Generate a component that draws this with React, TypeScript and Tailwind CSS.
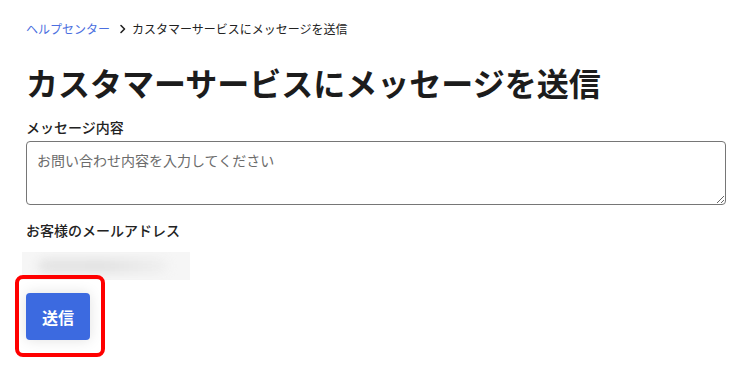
import React from 'react';

const font = { fontFamily: '"Noto Sans CJK JP", "Noto Sans", sans-serif' };

export default function App() {
    return (
        <div className="relative w-[752px] h-[366px] bg-white text-[#222] overflow-hidden" style={font}>
            <div className="pl-[26px] pr-[26px] pt-[20px]">
                {/* Breadcrumb */}
                <div className="flex items-center h-[18px] text-[12px] leading-[18px]">
                    <a className="text-[#4b6fe0]">ヘルプセンター</a>
                    <svg width="14" height="14" viewBox="0 0 14 14" className="ml-[6px] mr-[2px]">
                        <path d="M5 3.5 L8.5 7 L5 10.5" fill="none" stroke="#222" strokeWidth="1.6" strokeLinecap="round" strokeLinejoin="round" />
                    </svg>
                    <span className="text-[#222]">カスタマーサービスにメッセージを送信</span>
                </div>

                {/* Title */}
                <h1 className="mt-[24px] text-[32px] leading-[40px] font-bold text-[#1c1c1c]">
                    カスタマーサービスにメッセージを送信
                </h1>

                {/* Message */}
                <label className="block mt-[15px] text-[14px] leading-[20px] font-medium text-[#222]">メッセージ内容</label>
                <textarea
                    className="block mt-[4px] w-[700px] h-[64px] border border-[#767676] rounded-[4px] px-[10px] py-[8px] text-[14px] leading-[20px] placeholder:text-[#6b6b6b] outline-none"
                    style={font}
                    placeholder="お問い合わせ内容を入力してください"
                />

                {/* Email */}
                <label className="block mt-[15px] text-[14px] leading-[20px] font-medium text-[#222]">お客様のメールアドレス</label>
                <div className="mt-[12px] -ml-[4px] w-[168px] h-[28px] bg-[#f6f6f6] overflow-hidden flex items-center">
                    <div className="ml-[16px] w-[130px] h-[14px] rounded-full bg-gradient-to-r from-[#e4e4e4] via-[#e2e2e2] to-[#f0f0f0] blur-[5px]" />
                </div>

                {/* Submit */}
                <button className="mt-[13px] w-[64px] h-[47px] rounded-[4px] bg-[#3c6ae0] text-white text-[16px] font-bold shadow-[0_0_14px_rgba(0,0,0,0.12)]">
                    送信
                </button>
            </div>

            {/* Annotation highlight */}
            <div className="absolute left-[15px] top-[275px] w-[90px] h-[82px] border-[4px] border-[#ff0000] rounded-[8px]" />
        </div>
    );
}
